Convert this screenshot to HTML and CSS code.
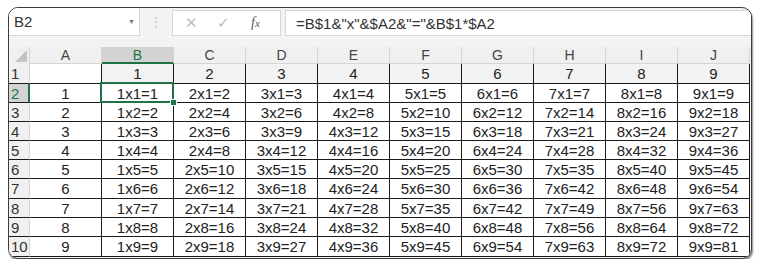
FILE: index.html
```html
<!DOCTYPE html>
<html lang="en">
<head>
    <meta charset="UTF-8">
    <title>Multiplication table</title>
    <link rel="stylesheet" href="styles.css">
</head>
<body>
    <div class="window">
        <div class="formula-bar">
            <div class="name-box">
                <span>B2</span>
                <span class="arrow">&#9660;</span>
            </div>
            <div class="grip">&#8942;</div>
            <div class="fn-box">
                <span class="fn-icon">&#10005;</span>
                <span class="fn-icon">&#10003;</span>
                <span class="fx"><i>f</i><i>x</i></span>
            </div>
            <div class="formula">=B$1&amp;"x"&amp;$A2&amp;"="&amp;B$1*$A2</div>
        </div>
        <div class="sheet">
            <div class="corner">
                <svg width="12" height="12" viewBox="0 0 12 12"><polygon points="12,0 12,12 0,12" fill="#c4c4c4"/></svg>
            </div>
            <div class="col-head">A</div>
            <div class="col-head active">B</div>
            <div class="col-head">C</div>
            <div class="col-head">D</div>
            <div class="col-head">E</div>
            <div class="col-head">F</div>
            <div class="col-head">G</div>
            <div class="col-head">H</div>
            <div class="col-head">I</div>
            <div class="col-head">J</div>

            <div class="row-head">1</div>
            <div class="cell blank"></div>
            <div class="cell top">1</div>
            <div class="cell top">2</div>
            <div class="cell top">3</div>
            <div class="cell top">4</div>
            <div class="cell top">5</div>
            <div class="cell top">6</div>
            <div class="cell top">7</div>
            <div class="cell top">8</div>
            <div class="cell top">9</div>

            <div class="row-head active">2</div>
            <div class="cell">1</div>
            <div class="cell selected">1x1=1</div>
            <div class="cell">2x1=2</div>
            <div class="cell">3x1=3</div>
            <div class="cell">4x1=4</div>
            <div class="cell">5x1=5</div>
            <div class="cell">6x1=6</div>
            <div class="cell">7x1=7</div>
            <div class="cell">8x1=8</div>
            <div class="cell">9x1=9</div>

            <div class="row-head">3</div>
            <div class="cell">2</div>
            <div class="cell">1x2=2</div>
            <div class="cell">2x2=4</div>
            <div class="cell">3x2=6</div>
            <div class="cell">4x2=8</div>
            <div class="cell">5x2=10</div>
            <div class="cell">6x2=12</div>
            <div class="cell">7x2=14</div>
            <div class="cell">8x2=16</div>
            <div class="cell">9x2=18</div>

            <div class="row-head">4</div>
            <div class="cell">3</div>
            <div class="cell">1x3=3</div>
            <div class="cell">2x3=6</div>
            <div class="cell">3x3=9</div>
            <div class="cell">4x3=12</div>
            <div class="cell">5x3=15</div>
            <div class="cell">6x3=18</div>
            <div class="cell">7x3=21</div>
            <div class="cell">8x3=24</div>
            <div class="cell">9x3=27</div>

            <div class="row-head">5</div>
            <div class="cell">4</div>
            <div class="cell">1x4=4</div>
            <div class="cell">2x4=8</div>
            <div class="cell">3x4=12</div>
            <div class="cell">4x4=16</div>
            <div class="cell">5x4=20</div>
            <div class="cell">6x4=24</div>
            <div class="cell">7x4=28</div>
            <div class="cell">8x4=32</div>
            <div class="cell">9x4=36</div>

            <div class="row-head">6</div>
            <div class="cell">5</div>
            <div class="cell">1x5=5</div>
            <div class="cell">2x5=10</div>
            <div class="cell">3x5=15</div>
            <div class="cell">4x5=20</div>
            <div class="cell">5x5=25</div>
            <div class="cell">6x5=30</div>
            <div class="cell">7x5=35</div>
            <div class="cell">8x5=40</div>
            <div class="cell">9x5=45</div>

            <div class="row-head">7</div>
            <div class="cell">6</div>
            <div class="cell">1x6=6</div>
            <div class="cell">2x6=12</div>
            <div class="cell">3x6=18</div>
            <div class="cell">4x6=24</div>
            <div class="cell">5x6=30</div>
            <div class="cell">6x6=36</div>
            <div class="cell">7x6=42</div>
            <div class="cell">8x6=48</div>
            <div class="cell">9x6=54</div>

            <div class="row-head">8</div>
            <div class="cell">7</div>
            <div class="cell">1x7=7</div>
            <div class="cell">2x7=14</div>
            <div class="cell">3x7=21</div>
            <div class="cell">4x7=28</div>
            <div class="cell">5x7=35</div>
            <div class="cell">6x7=42</div>
            <div class="cell">7x7=49</div>
            <div class="cell">8x7=56</div>
            <div class="cell">9x7=63</div>

            <div class="row-head">9</div>
            <div class="cell">8</div>
            <div class="cell">1x8=8</div>
            <div class="cell">2x8=16</div>
            <div class="cell">3x8=24</div>
            <div class="cell">4x8=32</div>
            <div class="cell">5x8=40</div>
            <div class="cell">6x8=48</div>
            <div class="cell">7x8=56</div>
            <div class="cell">8x8=64</div>
            <div class="cell">9x8=72</div>

            <div class="row-head">10</div>
            <div class="cell">9</div>
            <div class="cell">1x9=9</div>
            <div class="cell">2x9=18</div>
            <div class="cell">3x9=27</div>
            <div class="cell">4x9=36</div>
            <div class="cell">5x9=45</div>
            <div class="cell">6x9=54</div>
            <div class="cell">7x9=63</div>
            <div class="cell">8x9=72</div>
            <div class="cell">9x9=81</div>
        </div>
    </div>
</body>
</html>
```

FILE: styles.css
```css
body {
    margin: 7px 0 0 8px;
    background: #fff;
    font-family: 'Liberation Sans', Arial, sans-serif;
    color: #222;
}
.window {
    width: 742px;
    border: 1px solid #3c3c3c;
    border-radius: 10px;
    overflow: hidden;
    background: #f3f3f3;
    box-shadow: 1px 2px 2px rgba(0, 0, 0, 0.45);
    padding-bottom: 1px;
}
.formula-bar {
    display: flex;
    height: 28px;
    margin-bottom: 11px;
}
.name-box {
    width: 130px;
    background: #fff;
    border-right: 1px solid #d6d6d6;
    border-bottom: 1px solid #d6d6d6;
    display: flex;
    align-items: center;
    justify-content: space-between;
    padding: 0 4px 0 5px;
    box-sizing: border-box;
    width: 131px;
    font-size: 15px;
    color: #333;
}
.name-box .arrow {
    font-size: 7px;
    color: #777;
}
.grip {
    width: 32px;
    display: flex;
    align-items: center;
    justify-content: center;
    color: #c8c8c8;
    font-size: 14px;
}
.fn-box {
    width: 109px;
    box-sizing: border-box;
    margin-top: 2px;
    background: #fff;
    border: 1px solid #d6d6d6;
    display: flex;
    align-items: center;
    padding-left: 12px;
    gap: 19px;
    color: #bdbdbd;
    font-size: 15px;
}
.fx {
    font-family: 'Liberation Serif', serif;
    color: #555;
    font-size: 14px;
    margin-left: 2px;
}
.fx i:last-child {
    font-size: 11px;
}
.formula {
    flex: 1;
    margin: 2px 0 0 4px;
    background: #fff;
    border: 1px solid #d6d6d6;
    border-right: none;
    padding-left: 10px;
    display: flex;
    align-items: center;
    font-size: 15px;
    color: #333;
}
.sheet {
    display: grid;
    grid-template-columns: 21px repeat(10, 72px);
    grid-template-rows: 17px 20px 19px 19px 19px 19px 19px 20px 19px 19px 20px;
    background: #fff;
    width: 741px;
}
.corner {
    background: #f0f0f0;
    border-right: 1px solid #d4d4d4;
    display: flex;
    align-items: flex-end;
    justify-content: flex-end;
    padding: 0 2px 2px 0;
}
.col-head {
    background: #f0f0f0;
    border-right: 1px solid #d4d4d4;
    border-bottom: 1px solid #d4d4d4;
    display: flex;
    align-items: center;
    justify-content: center;
    font-size: 14px;
    color: #444;
}
.col-head.active {
    background: #d3d3d3;
    color: #217346;
    border-bottom: 2px solid #217346;
}
.row-head {
    background: #f0f0f0;
    border-right: 1px solid #d4d4d4;
    border-bottom: 1px solid #1a1a1a;
    display: flex;
    align-items: center;
    padding-left: 2px;
    font-size: 15px;
    color: #333;
}
.row-head.active {
    background: #d3d3d3;
    color: #217346;
    border-right: 2px solid #217346;
}
.cell {
    border-right: 1px solid #1a1a1a;
    border-bottom: 1px solid #1a1a1a;
    display: flex;
    align-items: center;
    justify-content: center;
    font-size: 15px;
    color: #222;
    position: relative;
}
.cell.top {
    background: #f2f2f2;
}
.cell.selected::after {
    content: '';
    position: absolute;
    left: -2px;
    top: -2px;
    right: -1px;
    bottom: -1px;
    border: 2px solid #217346;
}
.cell.selected::before {
    content: '';
    position: absolute;
    right: -4px;
    bottom: -4px;
    width: 5px;
    height: 5px;
    background: #217346;
    border: 1px solid #fff;
    z-index: 1;
}
```
